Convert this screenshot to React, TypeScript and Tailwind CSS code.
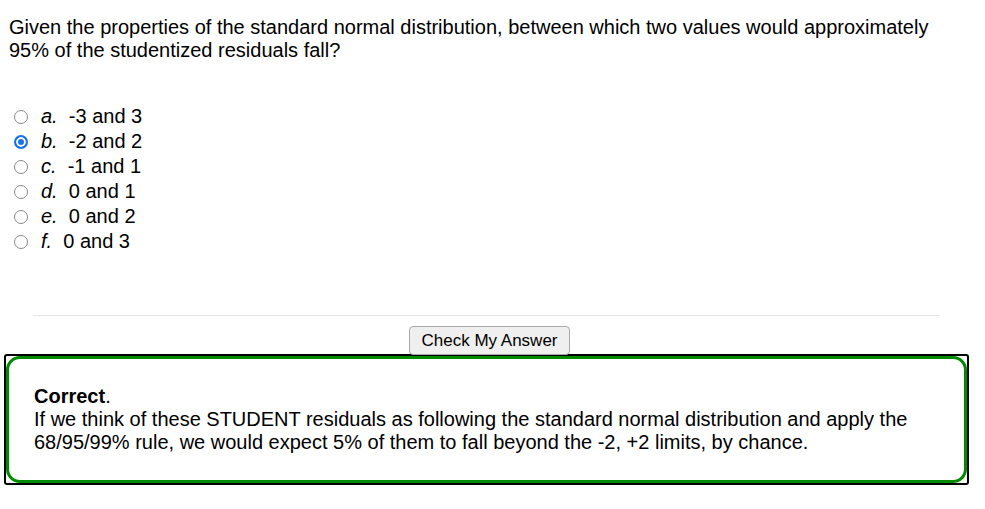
const options = [
  { key: "a.", value: "-3 and 3" },
  { key: "b.", value: "-2 and 2", checked: true },
  { key: "c.", value: "-1 and 1" },
  { key: "d.", value: "0 and 1" },
  { key: "e.", value: "0 and 2" },
  { key: "f.", value: "0 and 3" },
];

export default function App() {
  return (
    <div className="w-[985px] h-[509px] bg-white text-black font-['Liberation_Sans',Arial,sans-serif] text-[20px] leading-[23px]">
      {/* Question */}
      <p className="pt-[16px] pl-[9px] pr-[40px]">
        Given the properties of the standard normal distribution, between which two values would approximately
        95% of the studentized residuals fall?
      </p>

      {/* Options */}
      <div className="mt-[42px] flex flex-col">
        {options.map((o) => (
          <label key={o.key} className="flex items-center h-[25px]">
            <input
              type="radio"
              name="answer"
              defaultChecked={o.checked}
              className="appearance-none shrink-0 ml-[14px] mr-[13px] w-[14px] h-[14px] rounded-full border border-[#8a8a8a] bg-white checked:border-2 checked:border-[#1a73e8] checked:bg-[#1a73e8] checked:shadow-[inset_0_0_0_2px_white]"
            />
            <span className="italic">{o.key}</span>
            <span>{"\u00a0 "}{o.value}</span>
          </label>
        ))}
      </div>

      {/* Divider + button */}
      <div className="w-[965px] ml-[4px]">
        <hr className="mt-[61px] mx-[29px] border-0 border-t border-[#e6e6e6]" />
        <div className="flex justify-center mt-[10px] pl-[6px]">
          <button className="h-[29px] w-[161px] text-[17px] leading-none bg-[#efefef] border border-[#a8a8a8] rounded-[4px] text-black">
            Check My Answer
          </button>
        </div>

        {/* Feedback */}
        <div className="border-2 border-black rounded-[3px] mt-[-1px]">
          <div className="border-[3px] border-[#008a00] rounded-[14px] pt-[26px] pb-[26px] pl-[25px] pr-[20px]">
            <p>
              <span className="font-bold">Correct</span>.
            </p>
            <p>
              If we think of these STUDENT residuals as following the standard normal distribution and apply the
              68/95/99% rule, we would expect 5% of them to fall beyond the -2, +2 limits, by chance.
            </p>
          </div>
        </div>
      </div>
    </div>
  );
}
